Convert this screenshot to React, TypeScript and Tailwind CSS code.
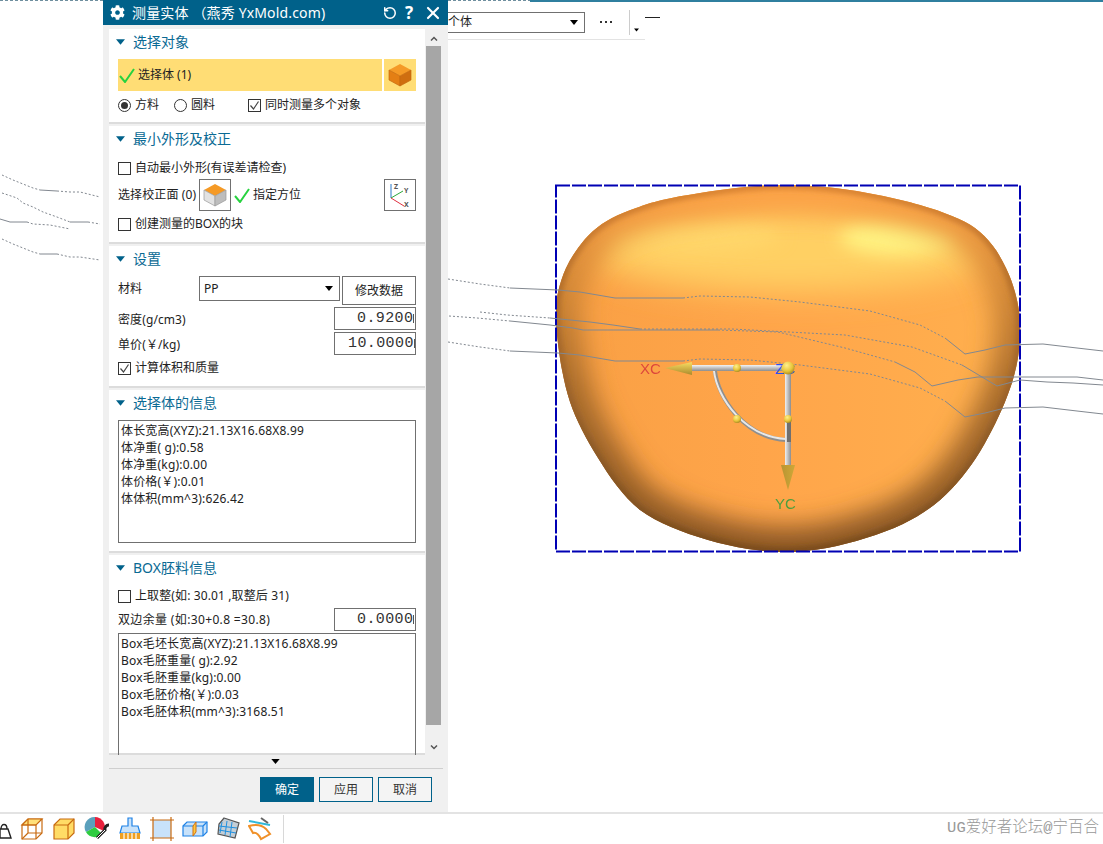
import type { ReactNode } from 'react';
import { FaCog } from 'react-icons/fa';
import { RotateCcw, X } from 'lucide-react';

// outline of the part, traced from the screenshot and smoothed below
const OUTLINE: [number, number][] = [
  [788, 185], [835, 188], [878, 195], [920, 205], [952, 216], [975, 228], [993, 246], [1006, 268], [1015, 292], [1020, 320],
  [1019, 350], [1014, 376], [1005, 402], [992, 430], [976, 458], [957, 483], [934, 505], [903, 524], [866, 538], [827, 548],
  [788, 552], [748, 549], [708, 540], [671, 527], [640, 510], [617, 486], [598, 458], [582, 430], [570, 402], [562, 370],
  [557, 335], [556, 312], [558, 292], [566, 268], [578, 248], [593, 231], [612, 218], [636, 208], [662, 200], [700, 193],
  [745, 187],
];

function smoothPath(points: [number, number][]) {
  const n = points.length;
  let d = `M${points[0][0]} ${points[0][1]}`;
  for (let i = 0; i < n; i++) {
    const [x0, y0] = points[(i - 1 + n) % n];
    const [x1, y1] = points[i];
    const [x2, y2] = points[(i + 1) % n];
    const [x3, y3] = points[(i + 2) % n];
    d += ` C${x1 + (x2 - x0) / 6} ${y1 + (y2 - y0) / 6} ${x2 - (x3 - x1) / 6} ${y2 - (y3 - y1) / 6} ${x2} ${y2}`;
  }
  return d + ' Z';
}

const BLOB = smoothPath(OUTLINE);

const solidLines = [
  '510,288 558,290 580,292 615,298 683,298',
  '945,338 965,354 985,350 1005,345 1043,344 1077,348 1103,351',
  '510,351 558,353 580,355 615,361 683,361',
  '945,401 965,417 985,413 1005,408 1043,407 1077,411 1103,414',
  '510,321 550,325 573,328 583,330 718,330',
  '895,362 915,372 932,386 958,380 978,377 1077,377 1103,380',
  '550,318 590,322 613,325 640,329',
  '962,365 997,386 1020,380 1047,382 1073,383 1103,385',
  '40,190 57,191',
  '70,222 88,222',
  '0,219 10,222 27,222',
  '40,254 57,254',
];

const dottedLines = [
  '448,279 480,284 510,288',
  '448,342 480,347 510,351',
  '449,316 477,318 510,321',
  '480,312 507,315 550,318',
  '683,298 700,296 750,297 800,302 870,311 920,325 945,338',
  '683,361 700,359 750,360 800,365 870,374 920,388 945,401',
  '718,330 778,332 845,348 895,362',
  '640,329 732,329 845,335 912,347 962,365',
  '2,175 13,180 33,188 40,190',
  '57,191 70,192 80,192 100,197',
  '2,193 17,198 23,203 33,207 43,212 57,217 70,222',
  '88,222 100,224',
  '27,222 33,224 50,225 70,229',
  '2,239 13,244 33,252 40,254',
  '57,254 70,257 80,257 100,260',
];

function Viewport() {
  return (
    <svg className="absolute inset-0 h-[812px] w-[1103px]" viewBox="0 0 1103 812">
      <defs>
        <clipPath id="blob">
          <path d={BLOB} />
        </clipPath>
        <linearGradient id="rim" x1="0" y1="0" x2="0" y2="1">
          <stop offset="0" stopColor="#dc8634" />
          <stop offset="0.25" stopColor="#b8722c" />
          <stop offset="0.7" stopColor="#8f5c28" />
          <stop offset="1" stopColor="#7a4c1c" />
        </linearGradient>
        <linearGradient id="haze" x1="0" y1="0" x2="0" y2="1">
          <stop offset="0" stopColor="#ffa548" />
          <stop offset="0.25" stopColor="#d68a38" />
          <stop offset="0.55" stopColor="#a86c2c" />
          <stop offset="1" stopColor="#8a5624" />
        </linearGradient>
        <linearGradient id="body" x1="0" y1="0" x2="1" y2="0">
          <stop offset="0" stopColor="#f9a044" />
          <stop offset="0.45" stopColor="#ffa54a" />
          <stop offset="1" stopColor="#ffb04e" />
        </linearGradient>
        <linearGradient id="shaft" x1="0" y1="0" x2="0" y2="1">
          <stop offset="0" stopColor="#f4f4f4" />
          <stop offset="1" stopColor="#8d8d8d" />
        </linearGradient>
        <linearGradient id="shaftV" x1="0" y1="0" x2="1" y2="0">
          <stop offset="0" stopColor="#f0f0f0" />
          <stop offset="1" stopColor="#8d8d8d" />
        </linearGradient>
        <linearGradient id="coneX" x1="0" y1="0" x2="0" y2="1">
          <stop offset="0" stopColor="#f8dc62" />
          <stop offset="1" stopColor="#a98a2c" />
        </linearGradient>
        <linearGradient id="coneY" x1="0" y1="0" x2="1" y2="0">
          <stop offset="0" stopColor="#b89432" />
          <stop offset="1" stopColor="#cfa838" />
        </linearGradient>
        <radialGradient id="ball" cx="0.4" cy="0.3" r="0.75">
          <stop offset="0" stopColor="#ffef8c" />
          <stop offset="0.6" stopColor="#e8c53a" />
          <stop offset="1" stopColor="#a08420" />
        </radialGradient>
        <filter id="blur2" x="-20%" y="-20%" width="140%" height="140%">
          <feGaussianBlur stdDeviation="2.5" />
        </filter>
        <filter id="blur12" x="-20%" y="-20%" width="140%" height="140%">
          <feGaussianBlur stdDeviation="13" />
        </filter>
        <filter id="blur10" x="-40%" y="-120%" width="180%" height="340%">
          <feGaussianBlur stdDeviation="9" />
        </filter>
        <filter id="blur20" x="-40%" y="-100%" width="180%" height="300%">
          <feGaussianBlur stdDeviation="16" />
        </filter>
      </defs>

      <line x1="0" y1="0.5" x2="104" y2="0.5" stroke="#6f8f9f" strokeDasharray="3 2" />
      <line x1="448" y1="0.5" x2="530" y2="0.5" stroke="#6f8f9f" strokeDasharray="3 2" />
      <line x1="530" y1="1" x2="1103" y2="1" stroke="#2f7f9f" strokeWidth="2" />
      <line x1="645" y1="17.5" x2="660" y2="17.5" stroke="#222222" />

      <g clipPath="url(#blob)">
        <path d={BLOB} fill="url(#body)" />
        <ellipse cx="790" cy="250" rx="200" ry="42" fill="#ffd064" filter="url(#blur20)" />
        <ellipse cx="690" cy="235" rx="90" ry="14" fill="#ffd86c" filter="url(#blur10)" />
        <ellipse cx="900" cy="236" rx="60" ry="18" fill="#fff684" filter="url(#blur10)" />
        <path d={BLOB} fill="none" stroke="url(#haze)" strokeWidth="50" filter="url(#blur12)" />
        <path d={BLOB} fill="none" stroke="url(#rim)" strokeWidth="9" filter="url(#blur2)" />
      </g>

      <rect x="556" y="185.5" width="464" height="366" fill="none" stroke="#0000b4" strokeWidth="2" strokeDasharray="14 2" />

      <g fill="none" stroke="#828890" strokeWidth="1">
        {solidLines.map((points) => (
          <polyline key={points} points={points} />
        ))}
      </g>
      <g fill="none" stroke="#828890" strokeWidth="1" strokeDasharray="2 2">
        {dottedLines.map((points) => (
          <polyline key={points} points={points} />
        ))}
      </g>

      <path d="M715 371 C718 398 745 438 786 440" fill="none" stroke="#8f8f8f" strokeWidth="4" />
      <path d="M714 371 C717 398 745 437 786 439" fill="none" stroke="#e8e8e8" strokeWidth="2" />
      <rect x="692" y="365" width="96" height="6" fill="url(#shaft)" />
      <rect x="785" y="368" width="6" height="98" fill="url(#shaftV)" />
      <rect x="787" y="422" width="4" height="20" fill="#6f6f6f" />
      <text x="640" y="374" fontSize="15" fontFamily="Liberation Sans, sans-serif" fill="#d8393a" opacity="0.85">XC</text>
      <text x="775" y="509" fontSize="15" fontFamily="Liberation Sans, sans-serif" fill="#2f9e3c" opacity="0.85">YC</text>
      <text x="775" y="374" fontSize="15" fontFamily="Liberation Sans, sans-serif" fill="#2a50f0">ZC</text>
      <polygon points="665,368 692,362 692,375" fill="url(#coneX)" />
      <polygon points="781,465 795,465 788,490" fill="url(#coneY)" />
      <circle cx="737" cy="368" r="4" fill="url(#ball)" />
      <circle cx="737" cy="419" r="4" fill="url(#ball)" />
      <circle cx="788" cy="419" r="4" fill="url(#ball)" />
      <circle cx="788" cy="368" r="6.5" fill="url(#ball)" />
    </svg>
  );
}

function Caret({ className }: { className: string }) {
  return (
    <svg className={className} viewBox="0 0 10 6">
      <polygon points="0,0 10,0 5,6" fill="currentColor" />
    </svg>
  );
}

function GreenCheck() {
  return (
    <svg className="h-[15px] w-[16px] shrink-0" viewBox="0 0 16 15">
      <path d="M1 8 L6 14 L15 1" fill="none" stroke="#27d23f" strokeWidth="2" />
    </svg>
  );
}

function Checkbox({ checked, label, className }: { checked?: boolean; label: string; className?: string }) {
  return (
    <div className="flex h-5 items-center gap-[4px]">
      <span className="flex h-[13px] w-[13px] items-center justify-center border border-[#333333] bg-white">
        {checked && (
          <svg className="h-[11px] w-[11px]" viewBox="0 0 11 11">
            <path d="M1.5 5.5 L4.5 9 L9.5 1.5" fill="none" stroke="#444444" strokeWidth="1.2" />
          </svg>
        )}
      </span>
      <span className={className}>{label}</span>
    </div>
  );
}

function Radio({ checked, label }: { checked?: boolean; label: string }) {
  return (
    <div className="flex h-5 items-center gap-[4px]">
      <span className="flex h-[13px] w-[13px] items-center justify-center rounded-full border border-[#333333] bg-white">
        {checked && <span className="h-[7px] w-[7px] rounded-full bg-[#333333]" />}
      </span>
      <span>{label}</span>
    </div>
  );
}

function Cube({ grey }: { grey?: boolean }) {
  return (
    <svg className="h-[24px] w-[24px]" viewBox="0 0 24 24">
      <polygon points="12,1 23,7 12,13 1,7" fill="#f59a26" />
      <polygon points="1,7 12,13 12,23 1,17" fill={grey ? '#e2e2e2' : '#e47f14'} stroke={grey ? '#9a9a9a' : '#c66a10'} strokeWidth="0.7" />
      <polygon points="23,7 12,13 12,23 23,17" fill={grey ? '#bdbdbd' : '#cf6e10'} stroke={grey ? '#9a9a9a' : '#c66a10'} strokeWidth="0.7" />
    </svg>
  );
}

function Section({ title, className, children }: { title: string; className: string; children: ReactNode }) {
  return (
    <section className={`mb-[2px] shrink-0 border-b-2 border-b-[#dcdcdc] bg-white ${className}`}>
      <div className="flex h-[26px] items-center pl-[7px] text-sm text-[#0a6a94]">
        <Caret className="mr-[8px] h-[6px] w-[9px] text-[#00618a]" />
        <span>{title}</span>
      </div>
      <div className="px-[9px]">{children}</div>
    </section>
  );
}

function NumberBox({ value, className }: { value: string; className: string }) {
  return (
    <div className={`flex h-[23px] w-[82px] items-center whitespace-nowrap border border-[#707070] bg-white font-['Liberation_Mono',monospace] text-[15px] tracking-[0.4px] text-[#333333] ${className}`}>
      <span>{value}</span>
      <span className="ml-auto mr-px h-[9px] w-px bg-[#555555]" />
    </div>
  );
}

function InfoBox({ lines, className }: { lines: string[]; className: string }) {
  return (
    <div className={`overflow-hidden border border-[#707070] pl-[2px] pt-px leading-[17px] tracking-[0.18px] ${className}`}>
      {lines.map((line) => (
        <div key={line}>{line}</div>
      ))}
    </div>
  );
}

function DialogButton({ label, primary }: { label: string; primary?: boolean }) {
  return (
    <button
      className={
        primary
          ? 'h-[25px] w-[54px] bg-[#00618a] text-white'
          : 'h-[25px] w-[54px] border border-[#00618a] bg-[#f4f4f4] text-[#333333]'
      }
    >
      {label}
    </button>
  );
}

function Dialog() {
  return (
    <div className="absolute left-[103px] top-0 flex h-[812px] w-[345px] flex-col bg-[#f0f0f0] text-xs text-[#222222]">
      <header className="flex h-[25px] shrink-0 items-center bg-[#00618a] text-white">
        <FaCog className="ml-[7px] mr-[7px] h-[15px] w-[15px]" />
        <span className="text-sm tracking-[0.15px]">测量实体 （燕秀 YxMold.com)</span>
        <RotateCcw className="ml-auto h-[14px] w-[14px]" strokeWidth={2.6} />
        <span className="ml-[7px] w-[10px] text-center text-[17px] font-bold leading-none">?</span>
        <X className="ml-[9px] mr-[5px] h-[20px] w-[20px]" strokeWidth={2.6} />
      </header>

      <div className="mt-[4px] flex h-[726px] shrink-0 pl-[6px]">
        <div className="h-full w-[316px] overflow-hidden">
          <Section title="选择对象" className="h-[95px]">
            <div className="mt-[4px] flex h-8 gap-[2px]">
              <div className="flex w-[264px] items-center gap-[3px] bg-[#ffdd75] pl-[1px]">
                <GreenCheck />
                <span>选择体 (1)</span>
              </div>
              <div className="flex w-8 items-center justify-center bg-[#ffdd75]">
                <Cube />
              </div>
            </div>
            <div className="mt-[4px] flex">
              <div className="w-[56px]">
                <Radio checked label="方料" />
              </div>
              <div className="w-[74px]">
                <Radio label="圆料" />
              </div>
              <Checkbox checked label="同时测量多个对象" />
            </div>
          </Section>

          <Section title="最小外形及校正" className="h-[118px]">
            <div className="mt-[6px]">
              <Checkbox label="自动最小外形(有误差请检查)" />
            </div>
            <div className="mt-[1px] flex h-8 items-center">
              <span className="w-[81px] whitespace-nowrap tracking-[0.1px]">选择校正面 (0)</span>
              <div className="flex h-8 w-8 items-center justify-center border border-[#707070]">
                <Cube grey />
              </div>
              <div className="ml-[3px]">
                <GreenCheck />
              </div>
              <span className="ml-[3px]">指定方位</span>
              <div className="ml-auto flex h-8 w-8 items-center justify-center border border-[#707070]">
                <svg className="h-[30px] w-[30px]" viewBox="0 0 30 30">
                  <path d="M6 18 V4" stroke="#2a78c8" strokeWidth="1" />
                  <path d="M6 18 L18 11" stroke="#2aa83c" strokeWidth="1" />
                  <path d="M6 18 L19 26" stroke="#e03040" strokeWidth="1" />
                  <text x="9" y="9" fontSize="7" fontWeight="700" fill="#555555">Z</text>
                  <text x="19" y="13" fontSize="7" fontWeight="700" fill="#555555">Y</text>
                  <text x="19" y="27" fontSize="7" fontWeight="700" fill="#555555">X</text>
                </svg>
              </div>
            </div>
            <div className="mt-[3px]">
              <Checkbox label="创建测量的BOX的块" />
            </div>
          </Section>

          <Section title="设置" className="h-[142px]">
            <div className="mt-[4px] flex items-start">
              <span className="mt-[5px] w-[81px]">材料</span>
              <div className="flex h-[25px] w-[141px] items-center justify-between border border-[#707070] pl-[4px] pr-[6px]">
                <span>PP</span>
                <Caret className="h-[5px] w-[8px] text-black" />
              </div>
              <div className="ml-[2px] flex h-[29px] w-[74px] items-center justify-center border border-[#707070]">
                修改数据
              </div>
            </div>
            <div className="mt-[2px] flex items-center justify-between">
              <span className="pt-[2px] tracking-[0.1px]">密度(g/cm3)</span>
              <NumberBox value="0.9200" className="pl-[22px]" />
            </div>
            <div className="mt-[2px] flex items-center justify-between">
              <span className="pt-[2px] tracking-[0.1px]">单价(￥/kg)</span>
              <NumberBox value="10.0000" className="pl-[13px]" />
            </div>
            <div className="mt-[3px]">
              <Checkbox checked label="计算体积和质量" />
            </div>
          </Section>

          <Section title="选择体的信息" className="h-[163px]">
            <InfoBox
              className="mt-[4px] h-[123px]"
              lines={[
                '体长宽高(XYZ):21.13X16.68X8.99',
                '体净重( g):0.58',
                '体净重(kg):0.00',
                '体价格(￥):0.01',
                '体体积(mm^3):626.42',
              ]}
            />
          </Section>

          <Section title="BOX胚料信息" className="h-[200px] border-b-0">
            <div className="mt-[5px]">
              <Checkbox label="上取整(如: 30.01 ,取整后 31)" className="tracking-[0.12px]" />
            </div>
            <div className="mt-[2px] flex items-center justify-between">
              <span className="tracking-[0.35px]">双边余量 (如:30+0.8 =30.8)</span>
              <NumberBox value="0.0000" className="pl-[22px]" />
            </div>
            <InfoBox
              className="mt-[2px] h-[130px]"
              lines={[
                'Box毛坯长宽高(XYZ):21.13X16.68X8.99',
                'Box毛胚重量( g):2.92',
                'Box毛胚重量(kg):0.00',
                'Box毛胚价格(￥):0.03',
                'Box毛胚体积(mm^3):3168.51',
              ]}
            />
          </Section>
        </div>

        <div className="ml-px flex w-[15px] flex-col items-center">
          <svg className="mt-[7px] h-[5px] w-[8px]" viewBox="0 0 8 5">
            <path d="M1 4.5 L4 1.5 L7 4.5" fill="none" stroke="#555555" strokeWidth="1.5" />
          </svg>
          <div className="mt-[5px] h-[679px] w-[15px] bg-[#a6a6a6]" />
          <svg className="mt-[20px] h-[5px] w-[8px]" viewBox="0 0 8 5">
            <path d="M1 0.5 L4 3.5 L7 0.5" fill="none" stroke="#555555" strokeWidth="1.5" />
          </svg>
        </div>
      </div>

      <div className="flex h-[13px] shrink-0 items-center justify-center">
        <Caret className="h-[5px] w-[9px] text-black" />
      </div>
      <div className="ml-[6px] mr-[5px] h-px shrink-0 bg-[#cfcfcf]" />
      <div className="mt-[8px] flex justify-end gap-[5px] pr-[16px]">
        <DialogButton primary label="确定" />
        <DialogButton label="应用" />
        <DialogButton label="取消" />
      </div>
    </div>
  );
}

function TopBar() {
  return (
    <div className="absolute left-[448px] top-[2px] flex h-[38px] w-[197px] items-center border-b border-b-[#e3e3e3] bg-white text-xs text-[#222222]">
      <div className="mt-[3px] flex h-[21px] w-[137px] items-center justify-between border border-l-0 border-[#707070] pr-[6px]">
        <span className="whitespace-nowrap">个体</span>
        <Caret className="h-[5px] w-[8px] text-black" />
      </div>
      <div className="ml-[15px] mt-[3px] flex w-[12px] justify-between">
        <span className="h-[2px] w-[2px] bg-[#333333]" />
        <span className="h-[2px] w-[2px] bg-[#333333]" />
        <span className="h-[2px] w-[2px] bg-[#333333]" />
      </div>
      <div className="ml-[17px] mt-[3px] flex h-[25px] w-[10px] items-end border-l border-l-[#cccccc] pl-[4px]">
        <Caret className="mb-[3px] h-[4px] w-[6px] text-black" />
      </div>
    </div>
  );
}

function ToolIcons() {
  return (
    <>
      <svg className="-mr-px h-[22px] w-[13px]" viewBox="0 0 13 22">
        <path d="M0 11 H8 L11 20 H0 Z" fill="#ffffff" stroke="#222222" strokeWidth="1.4" />
        <path d="M1 11 C1 5 7 5 7 11" fill="none" stroke="#222222" strokeWidth="1.4" />
      </svg>
      <svg className="h-[24px] w-[24px]" viewBox="0 0 24 24">
        <polygon points="2,8 8,2 22,2 22,16 16,22 2,22" fill="#ffffff" stroke="#c86a10" strokeWidth="1.2" />
        <polygon points="2,8 8,2 22,2 16,8" fill="#ffe07a" stroke="#c86a10" strokeWidth="1.2" />
        <path d="M8 2 V16 H22 M8 16 L2 22 M16 8 V22 M2 8 H16" fill="none" stroke="#c86a10" strokeWidth="1.2" />
      </svg>
      <svg className="h-[24px] w-[24px]" viewBox="0 0 24 24">
        <polygon points="2,8 8,2 22,2 22,16 16,22 2,22" fill="#ffdc66" stroke="#c86a10" strokeWidth="1.2" />
        <path d="M2 8 H16 V22 M16 8 L22 2" fill="none" stroke="#c86a10" strokeWidth="1.2" />
      </svg>
      <svg className="h-[26px] w-[26px]" viewBox="0 0 26 26">
        <path d="M11 11 L11 1 A10 10 0 0 0 2 16 Z" fill="#5aa0bc" />
        <path d="M11 11 L11 1 A10 10 0 0 1 20 15 Z" fill="#e8203c" />
        <path d="M11 11 L2 16 A10 10 0 0 0 18 18 Z" fill="#2ecc40" />
        <path d="M13 22 L21 14 A4 4 0 0 1 25 9" fill="none" stroke="#222222" strokeWidth="3" />
        <path d="M13 22 L21 14" stroke="#ffffff" strokeWidth="1" />
      </svg>
      <svg className="h-[24px] w-[24px]" viewBox="0 0 24 24">
        <path d="M10 1 H14 V9 H20 L22 16 H2 L4 9 H10 Z" fill="#c8e2fa" stroke="#1e82e6" strokeWidth="1.2" />
        <rect x="2" y="16" width="20" height="6" fill="#f0a020" />
        <path d="M6 16 V22 M10 16 V22 M14 16 V22 M18 16 V22" stroke="#ffffff" strokeWidth="1.2" />
      </svg>
      <svg className="h-[24px] w-[24px]" viewBox="0 0 24 24">
        <rect x="3" y="3" width="18" height="18" fill="#c8e2fa" />
        <path d="M0 3 H24 M0 21 H24 M3 0 V24 M21 0 V24" stroke="#c86a10" strokeWidth="1.2" />
      </svg>
      <svg className="h-[24px] w-[26px]" viewBox="0 0 26 24">
        <polygon points="1,9 5,5 25,5 25,15 21,19 1,19" fill="#c8e2fa" stroke="#1e82e6" strokeWidth="1.2" />
        <path d="M1 9 H21 V19 M21 9 L25 5" fill="none" stroke="#1e82e6" strokeWidth="1.2" />
        <polygon points="11,9 14,5 14,15 11,19" fill="#ffc840" stroke="#d07010" strokeWidth="1" />
      </svg>
      <svg className="h-[24px] w-[24px]" viewBox="0 0 24 24">
        <polygon points="8,1 23,6 19,21 2,17 3,7" fill="#c4ced6" stroke="#555555" strokeWidth="1.2" />
        <path d="M6 5 L4 16 M11 4 L9 18 M16 5 L14 20 M3 9 L21 11 M3 13 L20 16" stroke="#2090e0" strokeWidth="1" />
      </svg>
      <svg className="h-[24px] w-[24px]" viewBox="0 0 24 24">
        <path d="M1 4 L22 8" stroke="#30b8d8" strokeWidth="2" />
        <path d="M13 1 L20 6" stroke="#666666" strokeWidth="2" />
        <path d="M1 9 C8 7 14 8 18 12 L22 17 L13 22 C11 18 8 15 5 16 Z" fill="none" stroke="#f09028" strokeWidth="2" />
      </svg>
    </>
  );
}

export default function App() {
  return (
    <div className="flex h-[844px] w-[1103px] flex-col overflow-hidden bg-white font-['Noto_Sans','Noto_Sans_CJK_SC',sans-serif]">
      <main className="relative h-[812px] shrink-0">
        <Viewport />
        <TopBar />
        <Dialog />
      </main>
      <footer className="flex h-[32px] items-center border-t-2 border-t-[#e3e3e3]">
        <div className="flex items-center gap-[8px]">
          <ToolIcons />
        </div>
        <div className="ml-[11px] h-[28px] w-px bg-[#d8d8d8]" />
        <span className="ml-auto mr-[4px] font-['Liberation_Mono','Noto_Sans_CJK_SC',monospace] text-[15.5px] font-light text-[#999999]">
          UG爱好者论坛@宁百合
        </span>
      </footer>
    </div>
  );
}
